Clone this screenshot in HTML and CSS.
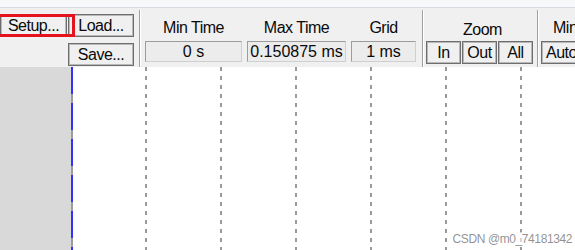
FILE: index.html
```html
<!DOCTYPE html>
<html lang="en">
<head>
    <meta charset="UTF-8">
    <meta name="viewport" content="width=device-width, initial-scale=1.0">
    <title>Waveform Viewer</title>
    <link rel="stylesheet" href="styles.css">
</head>
<body>
    <div class="titlebar"></div>

    <div class="toolbar">
        <div class="file-group">
            <button class="btn btn-setup">Setup...</button>
            <button class="btn">Load...</button>
            <button class="btn btn-save">Save...</button>
        </div>

        <div class="sep"></div>

        <div class="time-group">
            <div class="field field-min">
                <div class="label">Min Time</div>
                <div class="value">0 s</div>
            </div>
            <div class="field field-max">
                <div class="label">Max Time</div>
                <div class="value">0.150875 ms</div>
            </div>
            <div class="field field-grid">
                <div class="label">Grid</div>
                <div class="value">1 ms</div>
            </div>
        </div>

        <div class="sep"></div>

        <div class="zoom-group">
            <div class="label label-zoom">Zoom</div>
            <div class="zoom-buttons">
                <button class="btn btn-zoom">In</button>
                <button class="btn btn-zoom">Out</button>
                <button class="btn btn-zoom">All</button>
            </div>
        </div>

        <div class="sep"></div>

        <div class="minmax-group">
            <div class="label label-min">Min</div>
            <button class="btn btn-auto">Auto</button>
        </div>

        <!-- red highlight drawn over the Setup button -->
        <div class="highlight"></div>
    </div>

    <div class="plot">
        <div class="axis-panel"></div>
        <div class="cursor"></div>
        <div class="grid">
            <div class="gridline"></div>
            <div class="gridline"></div>
            <div class="gridline"></div>
            <div class="gridline"></div>
            <div class="gridline"></div>
            <div class="gridline"></div>
        </div>
        <div class="watermark">CSDN @m0_74181342</div>
    </div>
</body>
</html>
```

FILE: styles.css
```css
* {
    margin: 0;
    padding: 0;
    box-sizing: border-box;
}

html, body {
    width: 575px;
    height: 250px;
    overflow: hidden;
}

body {
    font-family: "Liberation Sans", Arial, sans-serif;
    font-size: 16px;
    color: #0a0a0a;
    background: #fff;
}

.titlebar {
    height: 8px;
    background: #f7f8fa;
    border-bottom: 1px solid #d6dbe1;
}

.toolbar {
    position: relative;
    display: flex;
    height: 59px;
    background: #f0f0f0;
    padding-top: 11px;
}

.btn {
    font-family: inherit;
    font-size: 16px;
    letter-spacing: -0.5px;
    color: #0a0a0a;
    height: 23px;
    background: #f0f0f0;
    border: 1px solid #6e6e6e;
    box-shadow: inset 0 0 0 1px #b9b9b9;
    line-height: 19px;
    text-align: center;
}

.file-group {
    display: grid;
    grid-template-columns: 67px 66px;
    column-gap: 1px;
    row-gap: 4px;
    margin-top: -5px;
    margin-right: 5px;
}

.btn-save {
    grid-column: 2;
}

.sep {
    margin-top: -9px;
    width: 2px;
    border-left: 1px solid #a0a0a0;
    border-right: 1px solid #fff;
}

.time-group {
    display: flex;
    gap: 5px;
    margin-left: 4px;
    margin-right: 6px;
}

.field {
    display: flex;
    flex-direction: column;
    align-items: center;
}

.label {
    line-height: 18px;
    letter-spacing: -0.5px;
    margin-bottom: 4px;
    white-space: nowrap;
}

.value {
    width: 100%;
    height: 21px;
    line-height: 19px;
    text-align: center;
    white-space: nowrap;
    background: #ececec;
    border: 1px solid #cfcfcf;
    border-top-color: #9c9c9c;
    border-left-color: #9c9c9c;
}

.field-min { width: 97px; }
.field-max { width: 99px; }
.field-grid { width: 65px; }

.zoom-group {
    display: flex;
    flex-direction: column;
    align-items: center;
    margin-left: 2px;
    margin-right: 4px;
}

.label-zoom {
    padding-left: 6px;
    position: relative;
    top: 2px;
}

.zoom-buttons {
    display: flex;
    gap: 1px;
}

.btn-zoom {
    width: 35px;
}

.minmax-group {
    display: flex;
    flex-direction: column;
    margin-left: 2px;
}

.label-min {
    padding-left: 12px;
}

.btn-auto {
    width: 44px;
    text-align: left;
    padding-left: 4px;
}

.highlight {
    position: absolute;
    top: 6px;
    left: -3px;
    width: 78px;
    height: 23px;
    border: 3px solid #e5141c;
}

.plot {
    position: relative;
    display: flex;
    height: 183px;
}

.axis-panel {
    width: 71px;
    background: #d9d9d9;
}

.cursor {
    width: 2px;
    background: repeating-linear-gradient(to bottom, #3030ff 0 27px, #9c9c9c 27px 36px);
}

.grid {
    flex: 1;
    display: flex;
    gap: 73px;
    padding-left: 72px;
}

.gridline {
    width: 2px;
    background: repeating-linear-gradient(to bottom, #9a9a9a 0 4px, transparent 4px 9px);
}

.watermark {
    position: absolute;
    right: 3px;
    bottom: 4px;
    font-size: 12px;
    letter-spacing: -0.4px;
    line-height: 14px;
    color: rgba(110, 110, 110, 0.75);
    background: rgba(255, 255, 255, 0.6);
}
```
